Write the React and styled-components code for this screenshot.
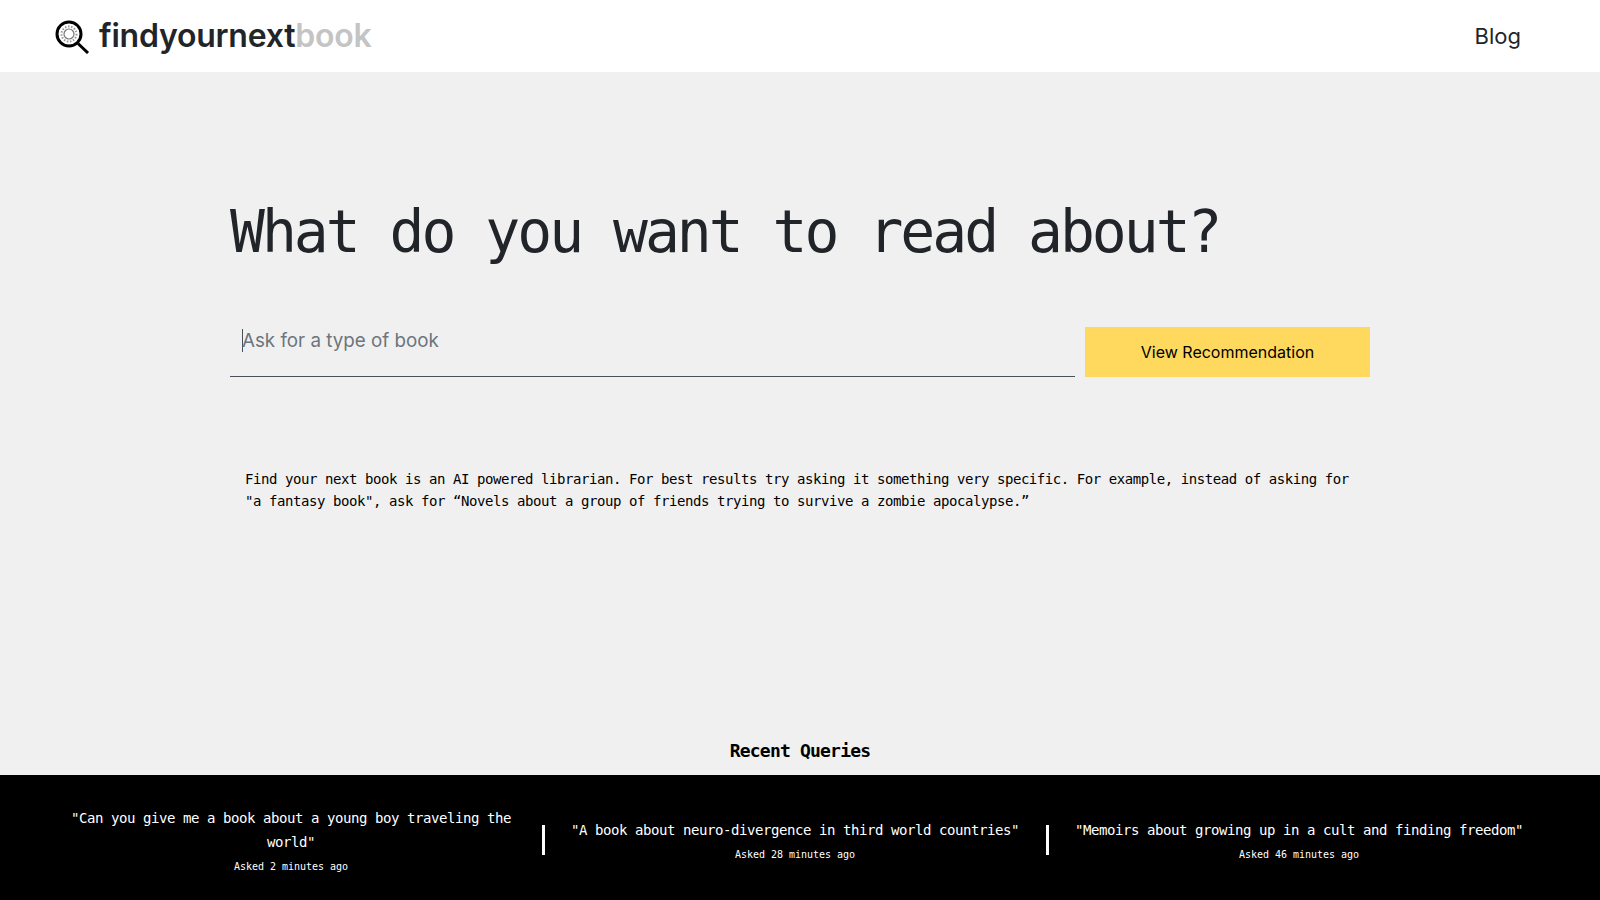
import React from "react"
import styled, { createGlobalStyle } from 'styled-components'

const mono = `"DejaVu Sans Mono", "Liberation Mono", monospace`

const GlobalStyle = createGlobalStyle`
    html, body {
        margin: 0;
        padding: 0;
    }
    body {
        background-color: #f0f0f0;
        font-family: Inter, sans-serif;
    }
`

const Page = styled.div`
    width: 1600px;
    height: 900px;
    display: flex;
    flex-direction: column;
    overflow: hidden;
`

const Header = styled.header`
    height: 72px;
    flex-shrink: 0;
    background-color: white;
    display: flex;
    align-items: center;
    justify-content: space-between;
    padding: 0 79px 0 55px;
`

const Brand = styled.div`
    display: flex;
    align-items: center;
    gap: 9px;
`

const BrandText = styled.div`
    font-size: 32px;
    font-weight: 600;
    color: #212529;
    letter-spacing: -0.23px;
    margin-top: -1px;
`

const BrandFaded = styled.span`
    color: #c4c4c4;
`

const NavLink = styled.a`
    font-size: 22px;
    color: #212529;
`

const Main = styled.main`
    flex: 1;
    width: 1140px;
    margin: 0 auto;
    padding-top: 126px;
    display: flex;
    flex-direction: column;
`

const Title = styled.h1`
    margin: 0;
    font-family: ${mono};
    font-weight: 400;
    font-size: 58px;
    letter-spacing: -3px;
    line-height: 68px;
    color: #212529;
`

const SearchRow = styled.div`
    display: flex;
    gap: 10px;
    margin-top: 61px;
`

const InputWrap = styled.div`
    flex: 1;
    height: 49px;
    border-bottom: 1px solid #495057;
    padding: 0 12px;
    display: flex;
`

const Input = styled.div`
    height: 23px;
    margin-top: 2px;
    box-shadow: inset 1px 0 0 #495057;
    font-size: 18.8px;
    line-height: 24px;
    color: #6c757d;
`

const Button = styled.button`
    width: 285px;
    height: 50px;
    border: none;
    background-color: #ffd95e;
    font-family: Inter, sans-serif;
    font-size: 16px;
    color: black;
`

const Intro = styled.p`
    margin: 91px 0 0;
    padding: 0 15px;
    font-family: ${mono};
    font-size: 14px;
    letter-spacing: -0.43px;
    line-height: 22px;
    color: black;
`

const RecentTitle = styled.h2`
    margin: 0 0 12px;
    font-family: ${mono};
    font-size: 18px;
    line-height: 24px;
    font-weight: 700;
    letter-spacing: -0.8px;
    text-align: center;
    color: black;
`

const Footer = styled.footer`
    height: 125px;
    flex-shrink: 0;
    background-color: black;
    color: white;
    display: grid;
    grid-template-columns: repeat(3, 504px);
    padding: 8px 0 0 39px;
    box-sizing: border-box;
`

const Query = styled.div`
    padding: 0 26px;
    text-align: center;
    display: flex;
    flex-direction: column;
    justify-content: center;
    position: relative;

    &::before {
        content: ${p => (p.$first ? "none" : '""')};
        position: absolute;
        left: -1px;
        top: 42px;
        width: 3px;
        height: 30px;
        background-color: white;
    }
`

const QueryText = styled.div`
    font-family: ${mono};
    font-size: 14px;
    letter-spacing: -0.43px;
    line-height: 24px;
`

const QueryTime = styled.div`
    font-family: ${mono};
    font-size: 10px;
    letter-spacing: -0.02px;
    line-height: 26px;
    height: 24px;
`

function Logo() {
    return (
        <svg width="35" height="35" viewBox="0 0 35 35" fill="none">
            <circle cx="14" cy="15" r="12" stroke="black" strokeWidth="3" />
            <circle cx="14" cy="15" r="5" stroke="#777" strokeWidth="1.2" />
            <circle cx="14" cy="15" r="7.5" stroke="#999" strokeWidth="2" strokeDasharray="1.5 1.6" />
            <path d="M23 24.5L33 34" stroke="black" strokeWidth="3" />
        </svg>
    )
}

const queries = [
    { text: '"Can you give me a book about a young boy traveling the world"', time: "Asked 2 minutes ago" },
    { text: '"A book about neuro-divergence in third world countries"', time: "Asked 28 minutes ago" },
    { text: '"Memoirs about growing up in a cult and finding freedom"', time: "Asked 46 minutes ago" },
]

function App() {
    return (
        <Page>
            <GlobalStyle />
            <Header>
                <Brand>
                    <Logo />
                    <BrandText>findyournext<BrandFaded>book</BrandFaded></BrandText>
                </Brand>
                <NavLink>Blog</NavLink>
            </Header>
            <Main>
                <Title>What do you want to read about?</Title>
                <SearchRow>
                    <InputWrap>
                        <Input>Ask for a type of book</Input>
                    </InputWrap>
                    <Button>View Recommendation</Button>
                </SearchRow>
                <Intro>
                    Find your next book is an AI powered librarian. For best results try asking it something very specific. For example, instead of asking for "a fantasy book", ask for “Novels about a group of friends trying to survive a zombie apocalypse.”
                </Intro>
            </Main>
            <RecentTitle>Recent Queries</RecentTitle>
            <Footer>
                {queries.map((q, i) => (
                    <Query key={q.time} $first={i === 0}>
                        <QueryText>{q.text}</QueryText>
                        <QueryTime>{q.time}</QueryTime>
                    </Query>
                ))}
            </Footer>
        </Page>
    )
}

export default App
